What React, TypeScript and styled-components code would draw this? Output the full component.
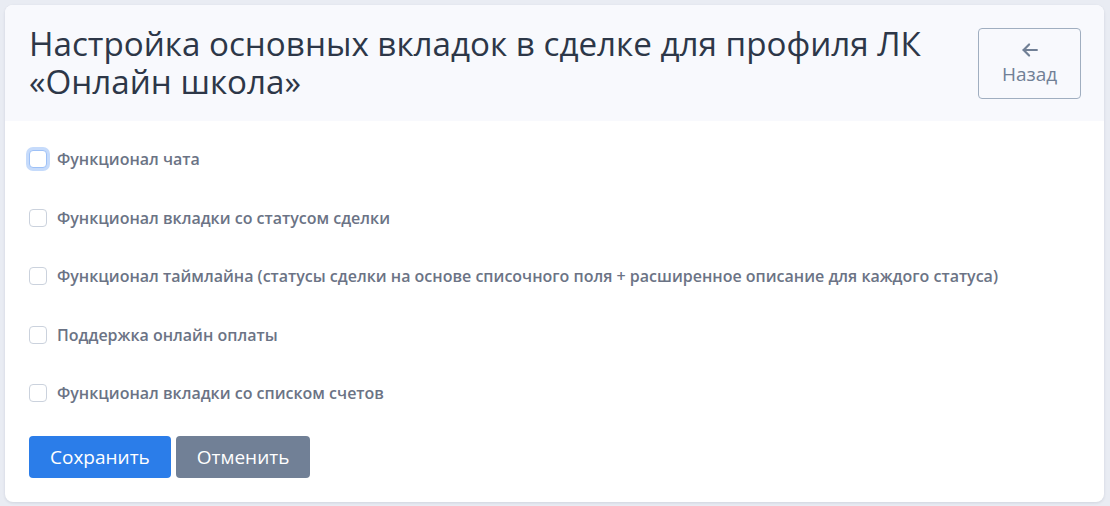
import React from "react";
import styled, { createGlobalStyle } from "styled-components";

const Global = createGlobalStyle`
  html, body { margin: 0; padding: 0; }
  body {
    background: #e9ecf3;
    font-family: "Open Sans", "Noto Sans", sans-serif;
  }
  * { box-sizing: border-box; }
`;

const Page = styled.div`
  padding: 5px 6px 4px 5px;
`;

const Card = styled.div`
  background: #ffffff;
  border-radius: 8px;
  box-shadow: 0 1px 3px rgba(30, 40, 70, 0.12);
  overflow: hidden;
`;

const Header = styled.div`
  background: #f8f9fd;
  padding: 20px 23px 20px 24px;
  display: flex;
  align-items: center;
  justify-content: space-between;
`;

const Title = styled.h1`
  margin: 0;
  font-size: 33.2px;
  line-height: 38px;
  font-weight: 400;
  color: #2d3748;
  max-width: 930px;
`;

const BackButton = styled.button`
  width: 103px;
  height: 71px;
  border: 1px solid #a0aec0;
  border-radius: 4px;
  background: transparent;
  color: #718096;
  font-family: inherit;
  font-size: 19px;
  display: flex;
  flex-direction: column;
  align-items: center;
  justify-content: center;
  gap: 0;
  padding: 0;
`;

const Body = styled.div`
  padding: 24px 24px 24px 24px;
  display: flex;
  flex-direction: column;
`;

const List = styled.div`
  display: flex;
  flex-direction: column;
  gap: 30.5px;
`;

const Row = styled.label`
  display: flex;
  align-items: center;
  gap: 10px;
  height: 28px;
`;

const Box = styled.span<{ $focused?: boolean }>`
  width: 18px;
  height: 18px;
  border-radius: 4px;
  background: #fff;
  border: 1px solid ${(p) => (p.$focused ? "#9ec1f7" : "#cbd2dd")};
  box-shadow: ${(p) => (p.$focused ? "0 0 0 3px #c6dbfb" : "none")};
  flex: none;
`;

const LabelText = styled.span`
  font-size: 16px;
  font-weight: 600;
  color: #6b7385;
`;

const Actions = styled.div`
  display: flex;
  gap: 5px;
  margin-top: 29px;
`;

const Btn = styled.button<{ $variant: "primary" | "secondary" }>`
  height: 42px;
  padding: 0 21px;
  border: none;
  border-radius: 4px;
  font-family: inherit;
  font-size: 19px;
  color: #fff;
  background: ${(p) => (p.$variant === "primary" ? "#2b7de9" : "#718096")};
`;

const items = [
  "Функционал чата",
  "Функционал вкладки со статусом сделки",
  "Функционал таймлайна (статусы сделки на основе списочного поля + расширенное описание для каждого статуса)",
  "Поддержка онлайн оплаты",
  "Функционал вкладки со списком счетов",
];

export default function App() {
  return (
    <>
      <Global />
      <Page>
        <Card>
          <Header>
            <Title>Настройка основных вкладок в сделке для профиля ЛК «Онлайн школа»</Title>
            <BackButton>
              <svg width="22" height="22" viewBox="0 0 24 24" fill="none" stroke="#718096" strokeWidth="2.4" strokeLinecap="round" strokeLinejoin="round">
                <path d="M19.5 12H5" />
                <path d="M11 18l-6-6 6-6" />
              </svg>
              <span>Назад</span>
            </BackButton>
          </Header>
          <Body>
            <List>
              {items.map((t, i) => (
                <Row key={t}>
                  <Box $focused={i === 0} />
                  <LabelText>{t}</LabelText>
                </Row>
              ))}
            </List>
            <Actions>
              <Btn $variant="primary">Сохранить</Btn>
              <Btn $variant="secondary">Отменить</Btn>
            </Actions>
          </Body>
        </Card>
      </Page>
    </>
  );
}
